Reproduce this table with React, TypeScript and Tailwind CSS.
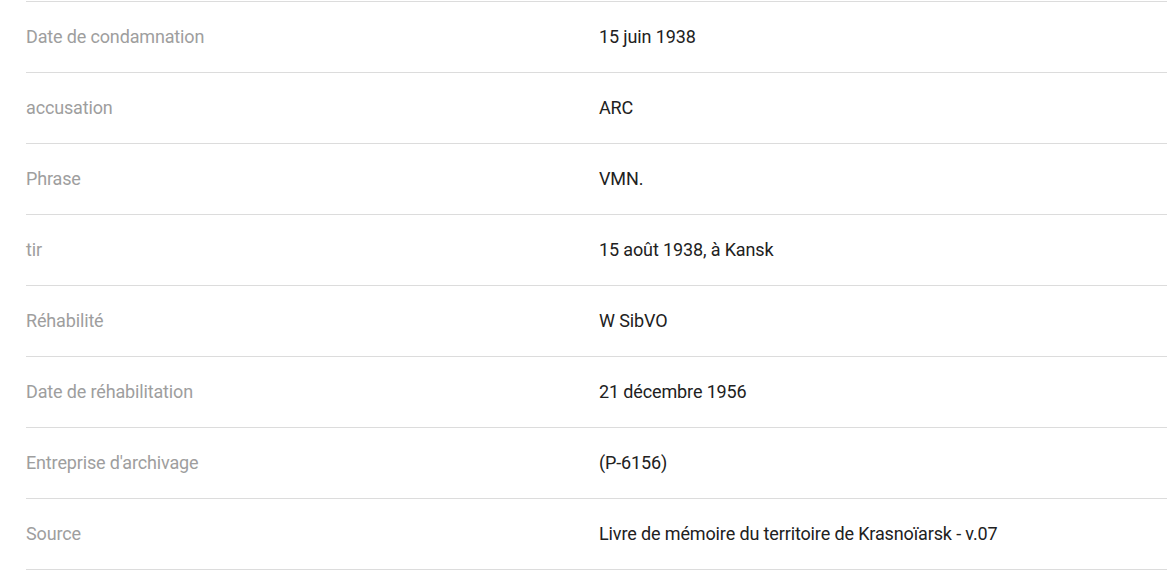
const rows: [string, string][] = [
  ["Date de condamnation", "15 juin 1938"],
  ["accusation", "ARC"],
  ["Phrase", "VMN."],
  ["tir", "15 août 1938, à Kansk"],
  ["Réhabilité", "W SibVO"],
  ["Date de réhabilitation", "21 décembre 1956"],
  ["Entreprise d'archivage", "(P-6156)"],
  ["Source", "Livre de mémoire du territoire de Krasnoïarsk - v.07"],
];

export default function App() {
  return (
    <div className="min-h-screen bg-white pt-px pl-[26px] font-['Roboto',sans-serif] text-[18px]">
      <div className="border-t border-[#dcdcdc]">
        {rows.map(([label, value]) => (
          <div key={label} className="grid grid-cols-[573px_1fr] h-[71px] pb-[2px] items-center border-b border-[#dcdcdc]">
            <div className="text-[#9e9e9e] tracking-[-0.15px]">{label}</div>
            <div className="text-[#212121] tracking-[-0.13px]">{value}</div>
          </div>
        ))}
      </div>
    </div>
  );
}
